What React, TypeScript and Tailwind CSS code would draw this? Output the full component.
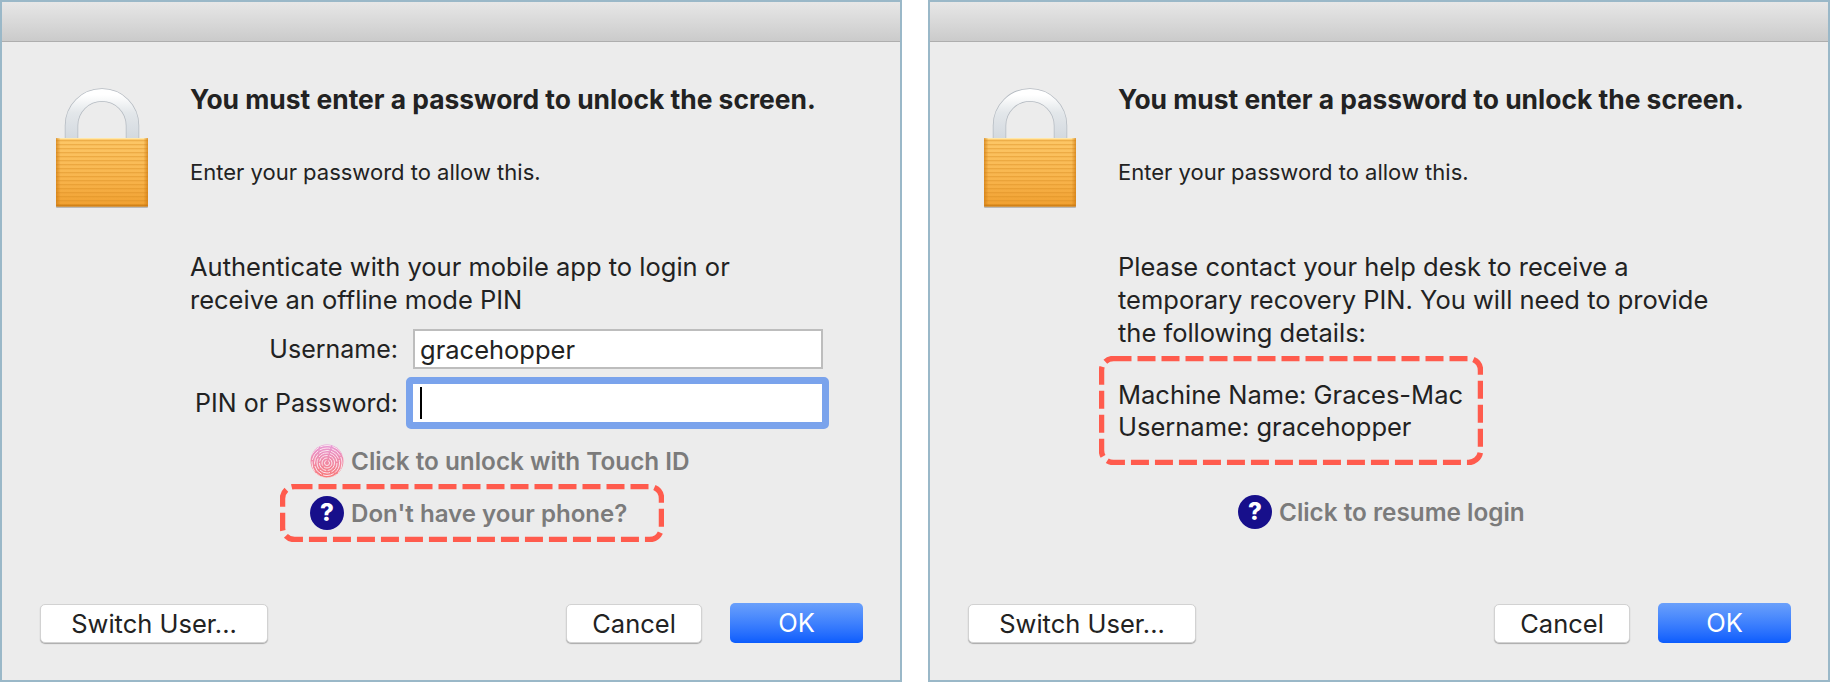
import type { ReactNode } from "react";

function LockIcon() {
  const stripes = [];
  for (let y = 139; y < 203; y += 4) stripes.push(y);
  return (
    <svg width="100" height="125" viewBox="52 84 100 125" className="block">
      <defs>
        <linearGradient id="shackleTop" x1="0" y1="0" x2="0" y2="1">
          <stop offset="0" stopColor="#ffffff" />
          <stop offset="0.4" stopColor="#e3e7ea" />
          <stop offset="1" stopColor="#d3d9df" />
        </linearGradient>
        <linearGradient id="body" x1="0" y1="0" x2="0" y2="1">
          <stop offset="0" stopColor="#fdc868" />
          <stop offset="0.6" stopColor="#f8b44c" />
          <stop offset="1" stopColor="#f0a030" />
        </linearGradient>
        <linearGradient id="edge" x1="0" y1="0" x2="1" y2="0">
          <stop offset="0" stopColor="#cf7a10" stopOpacity="0.7" />
          <stop offset="0.05" stopColor="#cf7a10" stopOpacity="0" />
          <stop offset="0.95" stopColor="#cf7a10" stopOpacity="0" />
          <stop offset="1" stopColor="#cf7a10" stopOpacity="0.7" />
        </linearGradient>
      </defs>
      <path d="M71.500 138V124.500a30.500 30.500 0 0 1 61 0V138" fill="none" stroke="#b4bac1" strokeWidth="13.500" />
      <path d="M71.500 138V124.500a30.500 30.500 0 0 1 61 0V138" fill="none" stroke="url(#shackleTop)" strokeWidth="12" />
      <rect x="56" y="205" width="92" height="2" rx="1" fill="#b9b9b9" />
      <path d="M56 137H148V202a3.500 3.500 0 0 1-3.500 3.500H59.500a3.500 3.500 0 0 1-3.500-3.500Z" fill="url(#body)" />
      {stripes.map((y) => (
        <rect key={y} x="56" y={y} width="92" height="1.300" fill="#d98d22" opacity="0.42" />
      ))}
      <rect x="56" y="137" width="92" height="1.200" fill="#ffe7a8" />
      <rect x="56" y="203.500" width="92" height="2" fill="#cc7d14" opacity="0.85" />
      <rect x="56" y="137" width="92" height="68.500" fill="url(#edge)" />
    </svg>
  );
}

function Fingerprint() {
  const radii = [2.5, 5, 7.500, 10, 12.500, 15, 17.500];
  return (
    <svg width="34" height="34" viewBox="0 0 34 34" className="shrink-0">
      <defs>
        <linearGradient id="fp" x1="0" y1="0" x2="0" y2="1">
          <stop offset="0" stopColor="#e79ad8" />
          <stop offset="1" stopColor="#f87a78" />
        </linearGradient>
        <clipPath id="fpClip">
          <circle cx="17" cy="17" r="16.500" />
        </clipPath>
      </defs>
      <circle cx="17" cy="17" r="16.500" fill="url(#fp)" />
      <g clipPath="url(#fpClip)">
        {radii.map((r) => (
          <circle key={r} cx="17" cy="19" r={r} fill="none" stroke="#fbe6ee" strokeWidth="1" strokeDasharray="11 1.500" />
        ))}
      </g>
    </svg>
  );
}

function HelpIcon() {
  return (
    <span className="flex h-[34px] w-[34px] shrink-0 items-center justify-center rounded-full bg-[#170f8b] font-['Inter',sans-serif] text-[24px] font-extrabold leading-none text-white">
      ?
    </span>
  );
}

function DashedBox({ w, h }: { w: number; h: number }) {
  return (
    <svg
      width={w}
      height={h}
      viewBox={`0 0 ${w} ${h}`}
      className="pointer-events-none absolute left-0 top-0"
    >
      <rect
        x="2.500"
        y="2.500"
        width={w - 5}
        height={h - 5}
        rx="12"
        fill="none"
        stroke="#ff5b4d"
        strokeWidth="5.500"
        strokeDasharray="18 6"
      />
    </svg>
  );
}

function Button({ children, primary, className }: { children: ReactNode; primary?: boolean; className: string }) {
  return (
    <button
      className={
        primary
          ? `h-10 rounded-[5px] bg-gradient-to-b from-[#6aa0fb] to-[#0a5cfd] text-[25.500px] text-white ${className}`
          : `h-[39px] rounded-[5px] border border-[#d2d2d2] bg-white text-[25.500px] text-[#222] shadow-[0_1px_1px_#aaa] ${className}`
      }
    >
      {children}
    </button>
  );
}

function Window({ children }: { children: ReactNode }) {
  return (
    <div className="flex h-[682px] w-[902px] shrink-0 flex-col border-2 border-[#9ab8c8] bg-[#ececec]">
      <div className="h-[40px] shrink-0 border-b border-[#aeaeae] bg-gradient-to-b from-[#e7e7e7] to-[#cbcbcb]" />
      <div className="flex flex-1 flex-col pl-[50px] pr-[37px]">
        <div className="flex h-[146px] shrink-0">
          <div className="pt-[43px]">
            <LockIcon />
          </div>
          <div className="pl-[38px]">
            <h1 className="mt-[41px] whitespace-nowrap text-[26.400px] font-bold leading-[32px] text-[#222]">
              You must enter a password to unlock the screen.
            </h1>
            <p className="mt-[43px] text-[22px] leading-[28px] text-[#222]">Enter your password to allow this.</p>
          </div>
        </div>
        {children}
        <div className="mb-[37px] ml-[-12px] mt-auto flex items-end">
          <Button className="w-[228px]">Switch User...</Button>
          <Button className="ml-auto w-[136px]">Cancel</Button>
          <Button primary className="ml-[28px] w-[133px]">
            OK
          </Button>
        </div>
      </div>
    </div>
  );
}

export default function App() {
  return (
    <div className="flex w-[1830px] gap-[26px] font-['Inter',sans-serif]">
      <Window>
        <div className="mt-[62px] pl-[138px] text-[25.500px] leading-[33px] text-[#222]">
          <p>
            Authenticate with your mobile app to login or
            <br />
            receive an offline mode PIN
          </p>
          <div className="mt-[13px] grid grid-cols-[208px_410px] items-center gap-x-[15px] gap-y-[15px]">
            <label className="text-right text-[25px]">Username:</label>
            <div className="flex h-10 items-center border-2 border-[#bdbdbd] bg-white pl-[5px]">gracehopper</div>
            <label className="text-right text-[25px]">PIN or Password:</label>
            <div className="relative flex h-[38px] items-center bg-white pl-[7px]">
              <span className="absolute -bottom-[7px] -left-[7px] -right-[6px] -top-[7px] rounded-[5px] border-[7px] border-[#7aa3ec]" />
              <span className="h-8 w-[2px] bg-black" />
            </div>
          </div>
          <div className="mt-[22px] flex items-center gap-[7px] pl-[120px] text-[24.300px] font-semibold text-[#7b7b7b]">
            <Fingerprint />
            Click to unlock with Touch ID
          </div>
          <div className="relative ml-[90px] mt-[6px] flex h-[58px] w-[384px] items-center gap-[7px] pl-[30px] text-[24.100px] font-semibold text-[#7b7b7b]">
            <DashedBox w={384} h={58} />
            <HelpIcon />
            Don't have your phone?
          </div>
        </div>
      </Window>
      <Window>
        <div className="mt-[62px] pl-[138px] text-[25.500px] leading-[33px] text-[#222]">
          <p>
            Please contact your help desk to receive a
            <br />
            temporary recovery PIN. You will need to provide
            <br />
            the following details:
          </p>
          <div className="relative ml-[-19px] mt-[7px] flex h-[109px] w-[384px] flex-col justify-center pl-[19px] leading-[32px]">
            <DashedBox w={384} h={109} />
            <p>Machine Name: Graces-Mac</p>
            <p>Username: gracehopper</p>
          </div>
          <div className="mt-[30px] flex items-center gap-[7px] pl-[120px] text-[24.300px] font-semibold text-[#7b7b7b]">
            <HelpIcon />
            Click to resume login
          </div>
        </div>
      </Window>
    </div>
  );
}
